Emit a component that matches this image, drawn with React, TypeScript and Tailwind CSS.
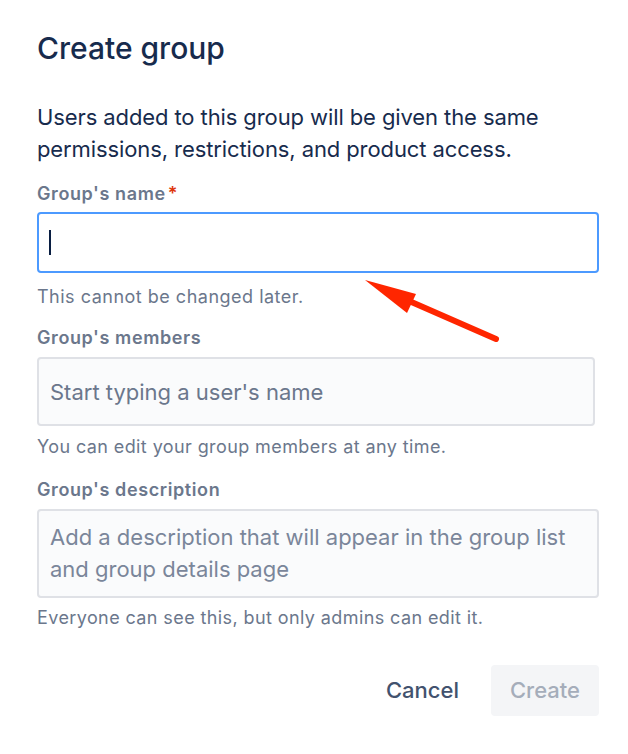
export default function App() {
  return (
    <div
      className="w-[628px] h-[754px] bg-white relative overflow-hidden"
      style={{ fontFamily: "Inter, 'Noto Sans', sans-serif" }}
    >
      <div className="px-[37px] pt-[32px] flex flex-col">
        <h1 className="text-[30px] leading-[32px] font-medium text-[#172B4D]">Create group</h1>

        <p className="mt-[37px] text-[22px] leading-[32px] tracking-[-0.1px] text-[#172B4D]">
          Users added to this group will be given the same permissions, restrictions, and product access.
        </p>

        {/* name */}
        <label className="mt-[19px] text-[18px] leading-[20px] tracking-[0.6px] font-semibold text-[#6B778C]">
          Group's name<span className="text-[#DE350B] ml-[2px]">*</span>
        </label>
        <div className="mt-[8px] w-[562px] h-[61px] rounded-[4px] border-2 border-[#4C9AFF] bg-white flex items-center px-[10px]">
          <div className="w-[2px] h-[25px] bg-[#091E42]" />
        </div>
        <p className="mt-[14px] text-[18px] leading-[20px] tracking-[0.5px] text-[#6B778C]">This cannot be changed later.</p>

        {/* members */}
        <label className="mt-[21px] text-[18px] leading-[20px] tracking-[0.6px] font-semibold text-[#6B778C]">Group's members</label>
        <div className="mt-[9px] w-[558px] h-[69px] rounded-[4px] border-2 border-[#DFE1E6] bg-[#FAFBFC] flex items-center px-[11px]">
          <span className="text-[22px] leading-[32px] text-[#6B778C]">Start typing a user's name</span>
        </div>
        <p className="mt-[11px] text-[18px] leading-[20px] tracking-[0.4px] text-[#6B778C]">You can edit your group members at any time.</p>

        {/* description */}
        <label className="mt-[23px] text-[18px] leading-[20px] tracking-[0.6px] font-semibold text-[#6B778C]">Group's description</label>
        <div className="mt-[9px] w-[562px] h-[89px] rounded-[4px] border-2 border-[#DFE1E6] bg-[#FAFBFC] px-[11px] pt-[10px]">
          <span className="text-[22px] leading-[32px] text-[#7A869A]">
            Add a description that will appear in the group list and group details page
          </span>
        </div>
        <p className="mt-[10px] text-[18px] leading-[20px] tracking-[0.4px] text-[#6B778C]">Everyone can see this, but only admins can edit it.</p>

        <div className="mt-[37px] flex justify-end gap-[8px] w-[562px]">
          <button className="h-[51px] px-[24px] rounded-[4px] text-[22px] font-medium text-[#42526E]">Cancel</button>
          <button className="h-[51px] w-[108px] rounded-[4px] bg-[#F4F5F7] text-[22px] font-medium text-[#A5ADBA]">Create</button>
        </div>
      </div>

      {/* annotation arrow */}
      <svg className="absolute left-0 top-0" width="628" height="754">
        <line x1="496" y1="339" x2="400" y2="297" stroke="#FF2600" strokeWidth="6" strokeLinecap="round" />
        <polygon points="365,280 416,294 407,313" fill="#FF2600" />
      </svg>
    </div>
  );
}
